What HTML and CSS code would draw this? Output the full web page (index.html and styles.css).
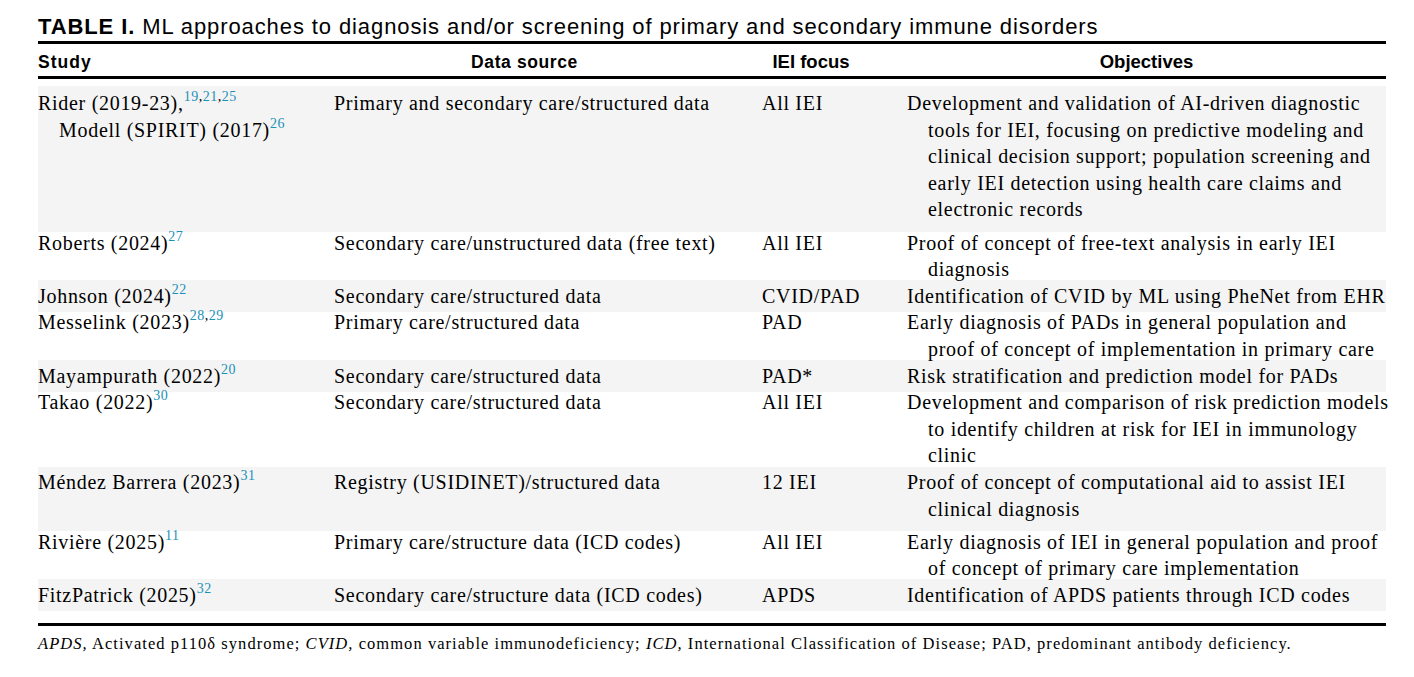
FILE: index.html
```html
<!DOCTYPE html>
<html lang="en">
<head>
<meta charset="utf-8">
<title>Table I</title>
<link rel="stylesheet" href="styles.css">
</head>
<body>
<div class="page">
  <h1 class="caption"><b>TABLE I.</b> ML approaches to diagnosis and/or screening of primary and secondary immune disorders</h1>
  <div class="table">
    <div class="head">
      <div class="th left">Study</div>
      <div class="th">Data source</div>
      <div class="th narrow">IEI focus</div>
      <div class="th narrow last">Objectives</div>
    </div>
    <div class="body">
      <div class="row shade first extra">
        <div class="td hang">Rider (2019-23),<sup><span>19</span>,<span>21</span>,<span>25</span></sup><br>Modell (SPIRIT) (2017)<sup><span>26</span></sup></div>
        <div class="td">Primary and secondary care/structured data</div>
        <div class="td">All IEI</div>
        <div class="td hang">Development and validation of AI-driven diagnostic<br>tools for IEI, focusing on predictive modeling and<br>clinical decision support; population screening and<br>early IEI detection using health care claims and<br>electronic records</div>
      </div>
      <div class="row plain">
        <div class="td hang">Roberts (2024)<sup><span>27</span></sup></div>
        <div class="td">Secondary care/unstructured data (free text)</div>
        <div class="td">All IEI</div>
        <div class="td hang">Proof of concept of free-text analysis in early IEI<br>diagnosis</div>
      </div>
      <div class="row shade">
        <div class="td hang">Johnson (2024)<sup><span>22</span></sup></div>
        <div class="td">Secondary care/structured data</div>
        <div class="td">CVID/PAD</div>
        <div class="td hang">Identification of CVID by ML using PheNet from EHR</div>
      </div>
      <div class="row plain">
        <div class="td hang">Messelink (2023)<sup><span>28</span>,<span>29</span></sup></div>
        <div class="td">Primary care/structured data</div>
        <div class="td">PAD</div>
        <div class="td hang">Early diagnosis of PADs in general population and<br>proof of concept of implementation in primary care</div>
      </div>
      <div class="row shade">
        <div class="td hang">Mayampurath (2022)<sup><span>20</span></sup></div>
        <div class="td">Secondary care/structured data</div>
        <div class="td">PAD*</div>
        <div class="td hang">Risk stratification and prediction model for PADs</div>
      </div>
      <div class="row plain">
        <div class="td hang">Takao (2022)<sup><span>30</span></sup></div>
        <div class="td">Secondary care/structured data</div>
        <div class="td">All IEI</div>
        <div class="td hang">Development and comparison of risk prediction models<br>to identify children at risk for IEI in immunology<br>clinic</div>
      </div>
      <div class="row shade extra">
        <div class="td hang">Méndez Barrera (2023)<sup><span>31</span></sup></div>
        <div class="td">Registry (USIDINET)/structured data</div>
        <div class="td">12 IEI</div>
        <div class="td hang">Proof of concept of computational aid to assist IEI<br>clinical diagnosis</div>
      </div>
      <div class="row plain">
        <div class="td hang">Rivière (2025)<sup><span>11</span></sup></div>
        <div class="td">Primary care/structure data (ICD codes)</div>
        <div class="td">All IEI</div>
        <div class="td hang">Early diagnosis of IEI in general population and proof<br>of concept of primary care implementation</div>
      </div>
      <div class="row shade">
        <div class="td hang">FitzPatrick (2025)<sup><span>32</span></sup></div>
        <div class="td">Secondary care/structure data (ICD codes)</div>
        <div class="td">APDS</div>
        <div class="td hang">Identification of APDS patients through ICD codes</div>
      </div>
    </div>
  </div>
  <p class="note"><i>APDS,</i> Activated p110δ syndrome; <i>CVID,</i> common variable immunodeficiency; <i>ICD,</i> International Classification of Disease; PAD, predominant antibody deficiency.</p>
</div>
</body>
</html>
```

FILE: styles.css
```css
html, body {
  margin: 0;
  padding: 0;
  background: #ffffff;
}

.page {
  padding: 14px 0 0 38px;
  width: 1348px;
  color: #000000;
}

.caption {
  margin: 0 0 1px 0;
  height: 26px;
  font-family: "Liberation Sans", Arial, sans-serif;
  font-size: 22px;
  line-height: 26px;
  font-weight: normal;
  letter-spacing: 0.9px;
  white-space: nowrap;
}

.caption b {
  font-weight: bold;
}

.table {
  border-top: 3px solid #000;
  border-bottom: 3px solid #000;
}

.head {
  display: grid;
  grid-template-columns: 296px 428px 145px 479px;
  border-bottom: 3px solid #000;
  padding: 8px 0 4px 0;
}

.th {
  font-family: "Liberation Sans", Arial, sans-serif;
  font-weight: bold;
  font-size: 17.5px;
  line-height: 20px;
  letter-spacing: 0.6px;
  text-align: center;
  padding-right: 47px;
  white-space: nowrap;
}

.th.left {
  text-align: left;
  padding-right: 0;
  letter-spacing: 1px;
}

.th.narrow {
  font-family: "Liberation Sans Narrow", "Liberation Sans", Arial, sans-serif;
  font-size: 18.5px;
  letter-spacing: 0;
}

.th.last {
  padding-right: 0;
}

.body {
  padding: 7px 0 12px 0;
}

.row {
  display: grid;
  grid-template-columns: 296px 428px 145px 479px;
  font-family: "Liberation Serif", "Times New Roman", serif;
  font-size: 20px;
  line-height: 26.6px;
  letter-spacing: 0.7px;
}

.row.shade {
  background: #f4f4f4;
  padding: 2.5px 0;
}

.row.shade.first {
  padding-top: 4.1px;
}

.row.shade.extra {
  padding-bottom: 9.1px;
}

.row.plain {
  margin: -2.5px 0;
}

.td {
  white-space: nowrap;
}

.td.hang {
  padding-left: 21px;
  text-indent: -21px;
}

sup {
  font-size: 14px;
  line-height: 0;
  vertical-align: 9px;
  letter-spacing: 0.5px;
}

sup span {
  color: #1b91b8;
}

.note {
  margin: 8px 0 0 0;
  font-family: "Liberation Serif", "Times New Roman", serif;
  font-size: 16.5px;
  line-height: 20px;
  letter-spacing: 1.05px;
  white-space: nowrap;
}
```
